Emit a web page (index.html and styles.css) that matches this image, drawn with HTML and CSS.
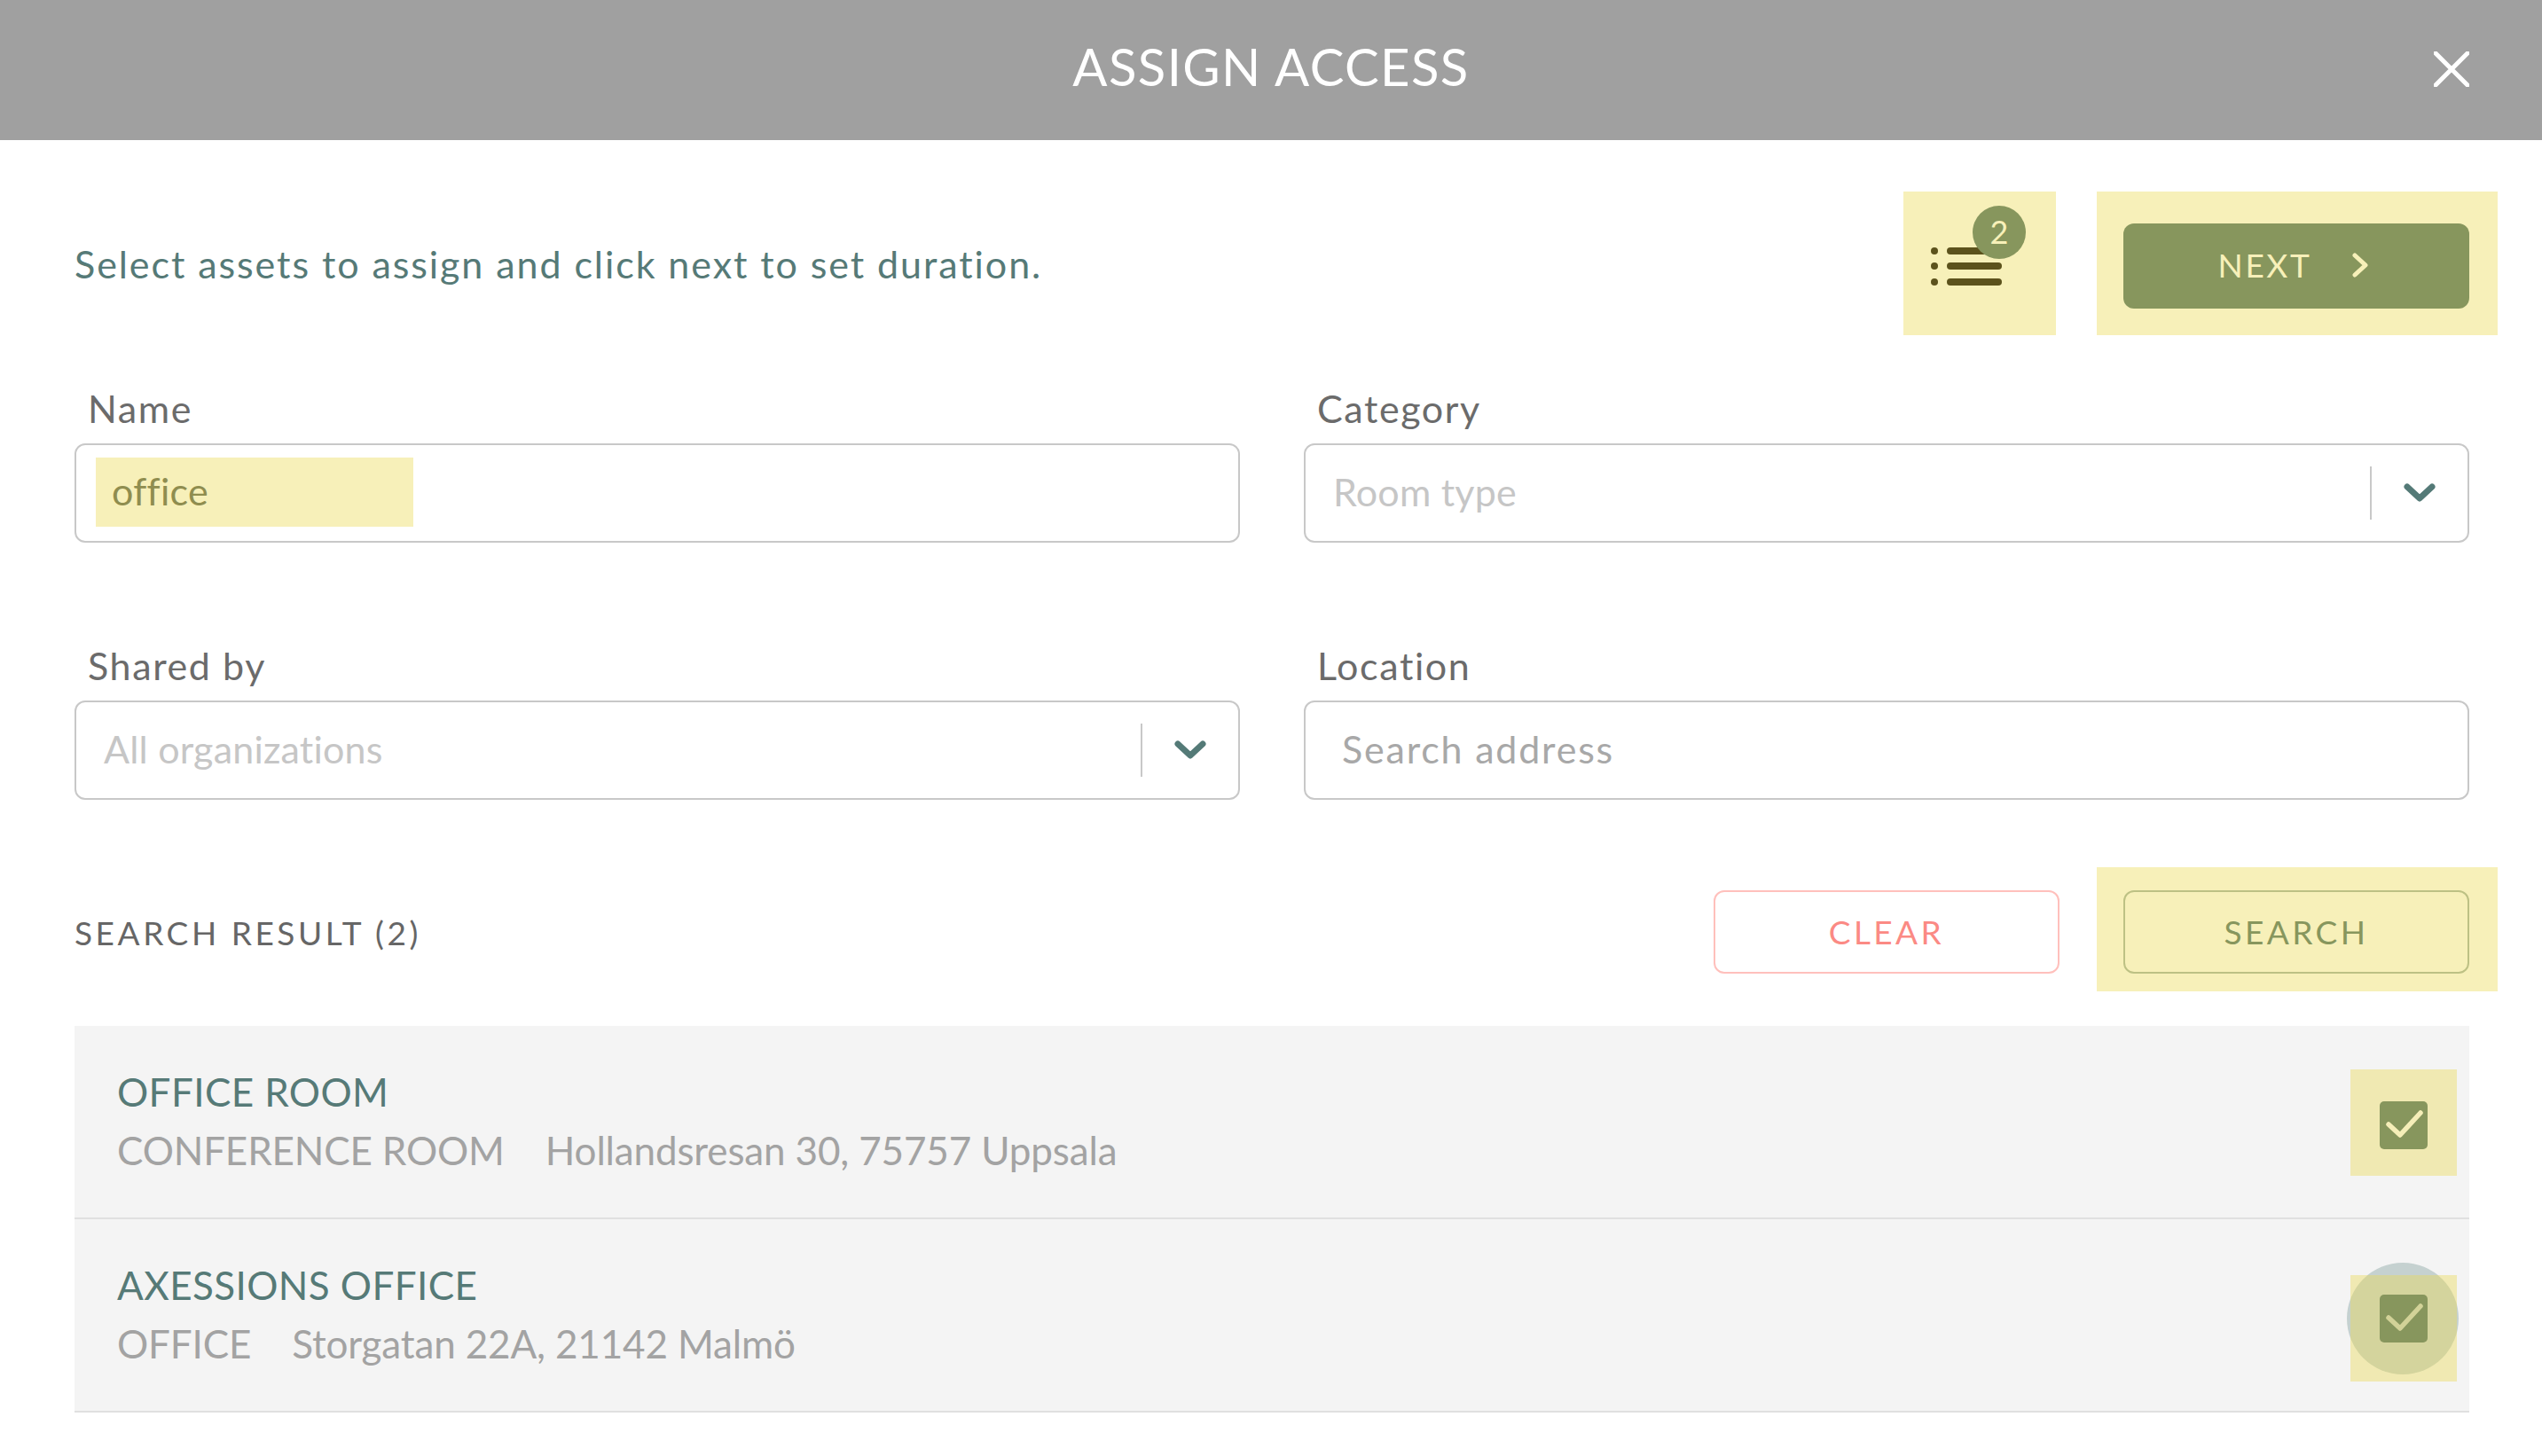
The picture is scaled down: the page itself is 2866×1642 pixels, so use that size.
FILE: index.html
```html
<!DOCTYPE html>
<html lang="en">
<head>
<meta charset="utf-8">
<title>Assign access</title>
<link rel="stylesheet" href="styles.css">
</head>
<body>
<header class="modal-head">
  <h1 class="modal-title">ASSIGN ACCESS</h1>
  <button class="close" aria-label="Close">
    <svg width="40" height="40" viewBox="0 0 40 40"><path d="M2 2 38 38M38 2 2 38" stroke="#fff" stroke-width="5" stroke-linecap="round"/></svg>
  </button>
</header>
<main class="content">
  <section class="toolbar">
    <p class="intro">Select assets to assign and click next to set duration.</p>
    <div class="hl hl-list">
      <svg class="list-icon" width="80" height="44" viewBox="0 0 80 44"><g fill="#5c521c"><circle cx="4" cy="4" r="4"/><circle cx="4" cy="21" r="4"/><circle cx="4" cy="39" r="4"/><rect x="18" y="0" width="62" height="8" rx="4"/><rect x="18" y="17" width="62" height="8" rx="4"/><rect x="18" y="35" width="62" height="8" rx="4"/></g></svg>
      <span class="count">2</span>
    </div>
    <div class="hl hl-next">
      <button class="btn btn-next">NEXT
        <svg width="18" height="28" viewBox="0 0 18 28"><path d="M3 3 15 14 3 25" fill="none" stroke="#f7f0b9" stroke-width="5" stroke-linecap="round" stroke-linejoin="round"/></svg>
      </button>
    </div>
  </section>

  <section class="form">
    <div class="field">
      <label class="label">Name</label>
      <div class="box box-name"><span class="typed"><span class="typed-text">office</span></span></div>
    </div>
    <div class="field">
      <label class="label">Category</label>
      <div class="box box-select"><span class="placeholder">Room type</span><span class="select-end"><svg width="36" height="22" viewBox="0 0 36 22"><path d="M4 4 18 17 32 4" fill="none" stroke="#547a77" stroke-width="7" stroke-linecap="round" stroke-linejoin="round"/></svg></span></div>
    </div>
    <div class="field">
      <label class="label">Shared by</label>
      <div class="box box-select"><span class="placeholder">All organizations</span><span class="select-end"><svg width="36" height="22" viewBox="0 0 36 22"><path d="M4 4 18 17 32 4" fill="none" stroke="#547a77" stroke-width="7" stroke-linecap="round" stroke-linejoin="round"/></svg></span></div>
    </div>
    <div class="field">
      <label class="label">Location</label>
      <div class="box box-search"><span class="placeholder placeholder-dark">Search address</span></div>
    </div>
  </section>

  <section class="result-bar">
    <h2 class="result-title">SEARCH RESULT (2)</h2>
    <button class="btn btn-clear">CLEAR</button>
    <div class="hl hl-search"><button class="btn btn-search">SEARCH</button></div>
  </section>

  <ul class="results">
    <li class="row">
      <div class="row-text">
        <div class="row-title">OFFICE ROOM</div>
        <div class="row-sub"><span>CONFERENCE ROOM</span><span>Hollandsresan 30, 75757 Uppsala</span></div>
      </div>
      <div class="check check-first">
        <span class="check-hl"></span>
        <svg class="check-box" width="54" height="54" viewBox="0 0 54 54"><rect width="54" height="54" rx="5" fill="#87965d"/><path d="M10 26 23 38 46 13" fill="none" stroke="#f5eeb8" stroke-width="5.5" stroke-linecap="round" stroke-linejoin="round"/></svg>
      </div>
    </li>
    <li class="row">
      <div class="row-text">
        <div class="row-title">AXESSIONS OFFICE</div>
        <div class="row-sub"><span>OFFICE</span><span>Storgatan 22A, 21142 Malmö</span></div>
      </div>
      <div class="check check-second">
        <span class="ripple"></span>
        <span class="check-hl"></span>
        <svg class="check-box" width="54" height="54" viewBox="0 0 54 54"><rect width="54" height="54" rx="5" fill="#87965d"/><path d="M10 26 23 38 46 13" fill="none" stroke="#d2d298" stroke-width="5.5" stroke-linecap="round" stroke-linejoin="round"/></svg>
      </div>
    </li>
  </ul>
</main>
</body>
</html>
```

FILE: styles.css
```css
* { box-sizing: border-box; }
html, body { margin: 0; padding: 0; background: #fff; }
body { font-family: "Lato", "Open Sans", sans-serif; width: 2866px; min-height: 1642px; overflow: hidden; }

.modal-head { height: 158px; background: #a0a0a0; display: flex; align-items: center; justify-content: center; position: relative; padding-bottom: 8px; }
.modal-title { margin: 0; color: #fff; font-size: 58px; font-weight: 400; letter-spacing: 1.4px; line-height: 1; }
.close { position: absolute; left: 2744px; top: 58px; width: 40px; height: 40px; padding: 0; border: 0; background: none; }
.close svg { display: block; }

.content { padding: 58px 82px 0 84px; }

.toolbar { display: flex; align-items: center; }
.intro { margin: 0 auto 0 0; font-size: 43px; color: #567a77; letter-spacing: 1.93px; line-height: 1; }
.hl { background: #f7f0b9; }
.hl-list { width: 172px; height: 162px; position: relative; margin-right: 46px; }
.list-icon { position: absolute; left: 31px; top: 63px; }
.count { position: absolute; left: 78px; top: 16px; width: 60px; height: 60px; border-radius: 50%; background: #87965d; color: #f7f0b9; font-size: 36px; display: flex; align-items: center; justify-content: center; padding-bottom: 2px; }
.hl-next { width: 452px; height: 162px; margin-right: -32px; padding: 36px 0 0 30px; }

.btn { font-family: inherit; border-radius: 12px; width: 390px; display: flex; align-items: center; justify-content: center; font-size: 37px; letter-spacing: 3.4px; padding: 0; }
.btn-next { height: 96px; background: #87965d; color: #f7f0b9; border: 0; gap: 46px; letter-spacing: 2.6px; padding: 0 7px 3px 0; }

.form { display: grid; grid-template-columns: 1314px 1314px; column-gap: 72px; row-gap: 114px; margin-top: 58px; }
.field { height: 176px; }
.label { display: block; height: 50px; line-height: 50px; padding-left: 15px; margin-bottom: 14px; font-size: 43px; color: #6b6b6b; letter-spacing: 1.6px; }
.box { height: 112px; border: 2px solid #c8c8c8; border-radius: 12px; display: flex; align-items: center; font-size: 43px; }
.box-name { padding: 0 0 2px 22px; }
.typed { width: 358px; height: 78px; background: #f7f0b9; display: flex; align-items: center; padding: 0 0 4px 18px; }
.typed-text { color: #8f8d4f; letter-spacing: 0.3px; }
.box-select { padding-left: 31px; justify-content: space-between; }
.box-search { padding-left: 41px; }
.placeholder { color: #c6c6c6; letter-spacing: 0.2px; padding-bottom: 4px; }
.placeholder-dark { color: #a8a8a8; letter-spacing: 1.8px; }
.select-end { width: 110px; height: 60px; border-left: 2px solid #c8c8c8; display: flex; align-items: center; justify-content: center; }

.result-bar { display: flex; align-items: center; margin-top: 76px; height: 140px; }
.result-title { margin: 0 auto 0 0; font-size: 37px; font-weight: 400; color: #666; letter-spacing: 3.55px; position: relative; top: 3px; }
.btn-clear { height: 94px; background: #fff; border: 2px solid #ffc0bc; color: #fb8a84; margin: 0 42px 0 0; align-self: flex-start; position: relative; top: 26px; padding-bottom: 2px; }
.hl-search { width: 452px; height: 140px; margin-right: -32px; padding: 26px 0 0 30px; }
.btn-search { height: 94px; background: transparent; border: 2px solid #bdc184; color: #87965d; padding-bottom: 2px; }

.results { list-style: none; margin: 39px 0 0; padding: 0; width: 2700px; }
.row { height: 218px; background: #f4f4f4; border-bottom: 2px solid #e0e0e0; display: flex; align-items: center; padding: 0 47px 0 48px; justify-content: space-between; }
.row-text { padding-bottom: 2px; }
.row-title { font-size: 44px; line-height: 60px; color: #567a77; letter-spacing: 0.4px; }
.row-sub { font-size: 44px; line-height: 60px; margin-top: 6px; color: #a3a3a3; letter-spacing: -0.15px; display: flex; gap: 46px; }

.check { position: relative; width: 54px; height: 54px; margin-top: 7px; }
.check-box { position: relative; display: block; }
.check-hl { position: absolute; left: -33px; width: 120px; height: 120px; background: rgba(235, 217, 80, 0.4); }
.check-first .check-hl { top: -36px; }
.check-second .check-hl { top: -22px; }
.ripple { position: absolute; left: -37px; top: -36px; width: 126px; height: 126px; border-radius: 50%; background: #c5d1d0; }
```
